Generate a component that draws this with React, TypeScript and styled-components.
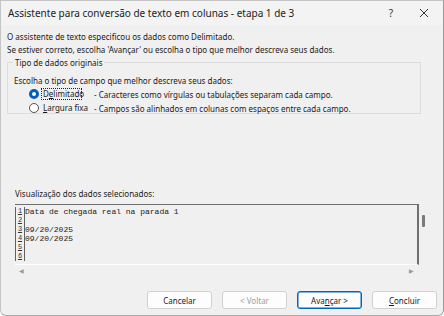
import React from "react";
import styled, { createGlobalStyle } from "styled-components";

const GlobalStyle = createGlobalStyle`
  html, body {
    margin: 0;
    padding: 0;
    background: #ffffff;
  }
  * {
    box-sizing: border-box;
  }
`;

const previewLines = [
  "Data de chegada real na parada 1",
  "",
  "09/20/2025",
  "09/20/2025",
  "",
  "",
];

export default function App() {
  return (
    <>
      <GlobalStyle />
      <Window>
        <TitleBar>
          <Title>Assistente para conversão de texto em colunas - etapa 1 de 3</Title>
          <TitleButtons>
            <HelpMark>?</HelpMark>
            <CloseMark>
              <svg width="10" height="10" viewBox="0 0 10 10">
                <path d="M1 1 L9 9 M9 1 L1 9" stroke="#333" strokeWidth="1" />
              </svg>
            </CloseMark>
          </TitleButtons>
        </TitleBar>
        <Body>
          <Text>O assistente de texto especificou os dados como Delimitado.</Text>
          <Text>
            Se estiver correto, escolha 'Avançar' ou escolha o tipo que melhor descreva seus dados.
          </Text>
          <GroupBox>
            <GroupLegend>Tipo de dados originais</GroupLegend>
            <GroupText>Escolha o tipo de campo que melhor descreva seus dados:</GroupText>
            <RadioRow>
              <Radio $checked />
              <RadioLabel $focused>
                D<u>e</u>limitado
              </RadioLabel>
              <RadioHint>- Caracteres como vírgulas ou tabulações separam cada campo.</RadioHint>
            </RadioRow>
            <RadioRow>
              <Radio />
              <RadioLabel>
                <u>L</u>argura fixa
              </RadioLabel>
              <RadioHint>- Campos são alinhados em colunas com espaços entre cada campo.</RadioHint>
            </RadioRow>
          </GroupBox>
          <PreviewTitle>Visualização dos dados selecionados:</PreviewTitle>
          <PreviewArea>
            <PreviewBox>
              {previewLines.map((line, i) => (
                <PreviewRow key={i}>
                  <LineNo>{i + 1}</LineNo>
                  <LineText>{line}</LineText>
                </PreviewRow>
              ))}
            </PreviewBox>
            <VScroll>
              <Thumb />
            </VScroll>
          </PreviewArea>
          <HScroll>
            <Arrow>◀</Arrow>
            <Arrow>▶</Arrow>
          </HScroll>
        </Body>
        <Footer>
          <Button>Cancelar</Button>
          <Button disabled>&lt; Voltar</Button>
          <Button $primary>
            Ava<u>n</u>çar &gt;
          </Button>
          <Button>
            <u>C</u>oncluir
          </Button>
        </Footer>
      </Window>
    </>
  );
}

const Window = styled.div`
  width: 444px;
  height: 316px;
  background: #f0f0f0;
  border: 1px solid #c4c4c4;
  border-right-color: #9a9a9a;
  border-bottom-color: #a8a8a8;
  border-radius: 0 0 6px 6px;
  display: flex;
  flex-direction: column;
  font-family: "Noto Sans", "Open Sans", sans-serif;
  color: #1a1a1a;
  overflow: hidden;
`;

const TitleBar = styled.div`
  height: 24px;
  display: flex;
  align-items: center;
  justify-content: space-between;
  padding: 0 0 0 7px;
  background: #f3f3f3;
`;

const Title = styled.div`
  font-size: 10px;
  color: #222;
`;

const TitleButtons = styled.div`
  display: flex;
  align-items: center;
  gap: 26px;
  padding-right: 14px;
`;

const HelpMark = styled.span`
  font-size: 10px;
  color: #333;
`;

const CloseMark = styled.span`
  display: flex;
`;

const Body = styled.div`
  flex: 1;
  display: flex;
  flex-direction: column;
  padding: 5px 0 0 6px;
`;

const Text = styled.div`
  font-size: 8px;
  line-height: 13px;
  white-space: nowrap;
`;

const GroupBox = styled.fieldset`
  margin: 1px 22px 0 0;
  padding: 0 0 4px 6px;
  border: 1px solid #dcdcdc;
  border-radius: 0;
  height: 57px;
`;

const GroupLegend = styled.legend`
  font-size: 8px;
  padding: 0 2px;
  margin-left: -1px;
  line-height: 11px;
`;

const GroupText = styled.div`
  font-size: 8px;
  line-height: 12px;
  margin-top: 7px;
`;

const RadioRow = styled.div`
  display: flex;
  align-items: center;
  height: 14px;
  padding-left: 15px;
  font-size: 8px;
`;

const Radio = styled.span<{ $checked?: boolean }>`
  flex-shrink: 0;
  width: 10px;
  height: 10px;
  border-radius: 50%;
  border: ${(p) => (p.$checked ? "3px solid #0060c0" : "1px solid #555")};
  background: #fff;
  margin-right: 3px;
`;

const RadioLabel = styled.span<{ $focused?: boolean }>`
  flex-shrink: 0;
  width: ${(p) => (p.$focused ? "39px" : "52px")};
  margin-right: ${(p) => (p.$focused ? "13px" : "0")};
  padding: 0 1px;
  line-height: 10px;
  outline: ${(p) => (p.$focused ? "1px dotted #222" : "none")};
`;

const RadioHint = styled.span`
  white-space: nowrap;
`;

const PreviewTitle = styled.div`
  font-size: 8px;
  line-height: 12px;
  margin: 74px 0 0 8px;
`;

const PreviewArea = styled.div`
  display: flex;
  margin: 4px 0 0 8px;
`;

const PreviewBox = styled.div`
  width: 404px;
  height: 61px;
  border-top: 1px solid #707070;
  border-right: 2px solid #707070;
  border-bottom: 1px solid #ffffff;
  padding-top: 2px;
  overflow: hidden;
`;

const PreviewRow = styled.div`
  display: flex;
  height: 9px;
  align-items: flex-start;
`;

const LineNo = styled.span`
  width: 10px;
  height: 9px;
  border-left: 1px solid #606060;
  border-right: 1px solid #606060;
  font-family: "Liberation Mono", monospace;
  font-size: 7px;
  line-height: 8px;
  text-decoration: underline;
  text-align: center;
  color: #333;
`;

const LineText = styled.span`
  font-family: "Liberation Mono", monospace;
  font-size: 8px;
  line-height: 9px;
  white-space: pre;
  color: #222;
`;

const VScroll = styled.div`
  width: 4px;
  margin-left: 3px;
  padding-top: 11px;
`;

const Thumb = styled.div`
  width: 3px;
  height: 12px;
  background: #7a7a7a;
  border-radius: 1px;
`;

const HScroll = styled.div`
  display: flex;
  justify-content: space-between;
  width: 404px;
  margin-left: 8px;
  padding: 2px 5px 0 4px;
`;

const Arrow = styled.span`
  font-size: 6px;
  color: #9a9a9a;
`;

const Footer = styled.div`
  display: flex;
  justify-content: flex-end;
  gap: 10px;
  padding: 0 6px 6px 0;
`;

const Button = styled.button<{ $primary?: boolean }>`
  width: 65px;
  height: 18px;
  background: #fdfdfd;
  border: 1px solid ${(p) => (p.$primary ? "#0067c0" : "#d0d0d0")};
  box-shadow: ${(p) => (p.$primary ? "inset 0 0 0 0.5px #0067c0" : "none")};
  border-radius: 3px;
  font-family: "Noto Sans", "Open Sans", sans-serif;
  font-size: 8px;
  color: #1a1a1a;
  padding: 0;
  &:disabled {
    color: #a0a0a0;
  }
`;
